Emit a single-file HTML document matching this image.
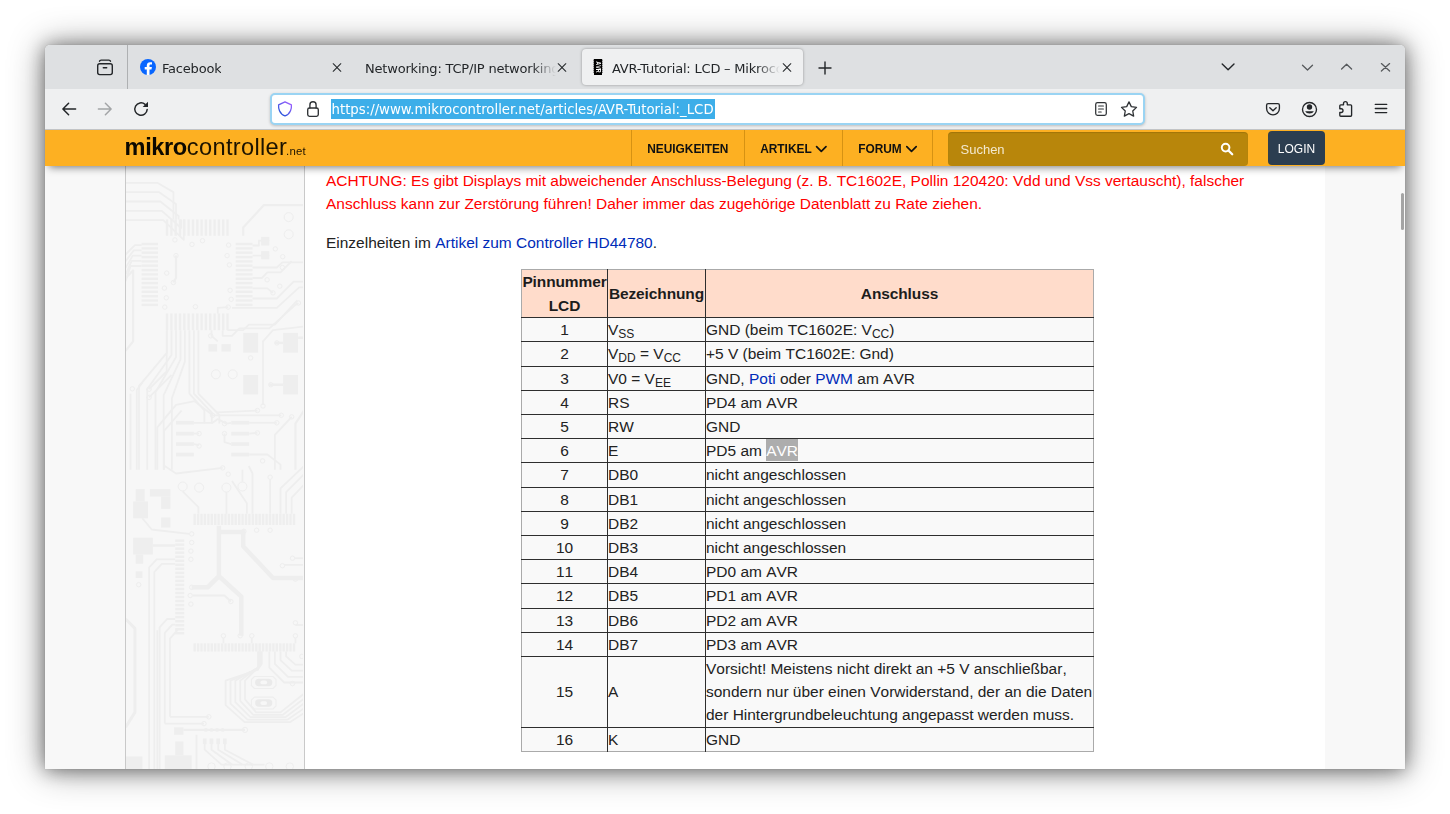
<!DOCTYPE html>
<html lang="de">
<head>
<meta charset="utf-8">
<title>AVR-Tutorial: LCD – Mikrocontroller.net</title>
<style>
*{box-sizing:border-box;margin:0;padding:0}
html,body{width:1450px;height:814px;overflow:hidden;background:#fff}
body{position:relative;font-family:"Liberation Sans",sans-serif}
#win{position:absolute;left:45px;top:45px;width:1360px;height:724px;background:#fff;border-radius:5px 5px 0 0;
 box-shadow:0 0 1px rgba(0,0,0,.25),0 1px 18px rgba(0,0,0,.42),0 1px 36px rgba(0,0,0,.42);}
#clip{position:absolute;inset:0;border-radius:5px 5px 0 0;overflow:hidden}
.ui{font-family:"DejaVu Sans","Liberation Sans",sans-serif;color:#232629;will-change:transform}
/* ---------- tab bar ---------- */
#tabbar{position:absolute;left:0;top:0;width:1360px;height:44px;background:#dee0e2}
#tabbar .sep{position:absolute;left:82px;top:0;width:1px;height:44px;background:#aeb0b2}
.tabtxt{position:absolute;top:14px;height:20px;line-height:20px;font-size:13px;white-space:nowrap;overflow:hidden;letter-spacing:-.2px}
.fade{-webkit-mask-image:linear-gradient(to right,#000 calc(100% - 24px),transparent 100%);mask-image:linear-gradient(to right,#000 calc(100% - 24px),transparent 100%)}
#acttab{position:absolute;left:537px;top:4px;width:221px;height:36px;background:#eff0f1;border-radius:4px;box-shadow:0 0 3px rgba(0,0,0,.35)}
svg{position:absolute;overflow:visible}
/* ---------- nav bar ---------- */
#navbar{position:absolute;left:0;top:44px;width:1360px;height:41px;background:#eff0f1;border-bottom:1px solid #c3c5c7}
#url{position:absolute;left:224.5px;top:4px;width:875px;height:32px;background:#fff;border:2px solid #9ad4f3;border-radius:5px;box-shadow:0 1px 3px rgba(0,0,0,.22)}
#urltxt{position:absolute;left:59px;top:4px;height:20px;line-height:20px;padding:0 1px;background:#3daee9;color:#fff;font-size:14.78px;font-family:"DejaVu Sans Condensed","DejaVu Sans",sans-serif;white-space:nowrap}
/* ---------- site header ---------- */
#hdr{position:absolute;left:0;top:85px;width:1360px;height:36px;background:#fdb022;box-shadow:0 5px 9px -4px rgba(0,0,0,.55);z-index:5}
#logo{position:absolute;left:79.6px;top:0;height:34px;line-height:34px;font-size:23.6px;color:#1c1300;white-space:nowrap;letter-spacing:.34px}
#logo b{font-weight:bold;color:#0d0900;letter-spacing:-.4px}
#logo small{font-size:11.4px;letter-spacing:.2px;margin-left:-1.2px}
.nav{position:absolute;top:0;height:36px;border-left:1px solid #d69213;line-height:39px;font-size:11.9px;font-weight:bold;color:#111;padding-left:15.2px;white-space:nowrap}
#search{position:absolute;left:903px;top:2px;width:300px;height:33.5px;background:#b8860b;border-radius:4px;box-shadow:inset 0 1px 1px rgba(0,0,0,.13);color:#f3e9cf;font-size:13px;line-height:35px;padding-left:12.5px}
#login{position:absolute;left:1223px;top:1px;width:57px;height:33.5px;background:#2c3e50;border-radius:4px;color:#fff;font-size:12px;line-height:36px;text-align:center}
/* ---------- page ---------- */
#page{position:absolute;left:0;top:121px;width:1360px;height:603px;background:#f8f8f8;overflow:hidden}
#side{position:absolute;left:80px;top:0;width:180px;height:603px;background:#f7f7f7;overflow:hidden}
#side i{position:absolute;top:0;width:1px;height:603px;background:#c9c9c9}
#main{position:absolute;left:260px;top:0;width:1020px;height:603px;background:#fff;font-size:15.47px;line-height:23.2px;color:#222;font-kerning:none}
#main p{position:absolute;left:21px;white-space:nowrap}
a{color:#002bb8;text-decoration:none}
#thumb{position:absolute;left:1356px;top:27px;width:3px;height:37px;border-radius:2px;background:#a4a4a4}
table{position:absolute;left:216px;top:103px;border-collapse:collapse;background:#f9f9f9;border:1px solid #aaa;font-size:15.47px;line-height:23.2px;color:#222;table-layout:fixed;width:573px}
td,th{border:1px solid #2e2e2e;padding:0;white-space:nowrap;text-align:left}
tr:first-child th{height:48.2px;padding:0;letter-spacing:-.1px}
th{background:#ffdccb;font-weight:bold;text-align:center;color:#1c1c1c}
tr:first-child th{border-top:none}
tr:last-child td{border-bottom:none}
td:first-child,th:first-child{border-left:none;text-align:center}
td:last-child,th:last-child{border-right:none}
sub{font-size:12px;line-height:0;vertical-align:-3px}
.sel{background:#adadad;color:#fff;padding:2.8px 0 1.4px}
</style>
</head>
<body>
<div id="win"><div id="clip">

<!-- TABBAR -->
<div id="tabbar" class="ui">
  <div class="sep"></div>
  <div class="tabtxt" style="left:117px">Facebook</div>
  <div class="tabtxt fade" style="left:320px;width:191px">Networking: TCP/IP networking</div>
  <div id="acttab"></div>
  <div class="tabtxt fade" style="left:567px;width:168px">AVR-Tutorial: LCD – Mikrocontroller.net</div>

  <svg width="1360" height="44" viewBox="45 45 1360 44" style="left:0;top:0" fill="none" stroke="#232629" stroke-linecap="round" stroke-linejoin="round">
    <!-- firefox view -->
    <g stroke-width="1.4">
      <rect x="97.7" y="63.7" width="14.6" height="10.9" rx="2"/>
      <path d="M99.5 61.2c.2-.7.8-1.100 1.600-1.100h7.800c.8 0 1.400.4 1.600 1.100"/>
      <path d="M103.3 67.800h3.400"/>
    </g>
    <!-- facebook -->
    <circle cx="148" cy="67" r="8" fill="#0866ff" stroke="none"/>
    <path d="M149.5 75v-5.5h2l.4-2.400h-2.400v-1.400c0-.8.3-1.300 1.400-1.300h1.100v-2.100c-.3-.05-1.100-.15-1.900-.15-2 0-3.300 1.200-3.300 3.300v1.650h-2.100v2.400h2.100V75z" fill="#fff" stroke="none"/>
    <!-- close buttons -->
    <g stroke-width="1.05">
      <path d="M333.2 63.7l7.6 7.6M340.8 63.7l-7.6 7.6"/>
      <path d="M558.2 63.7l7.6 7.6M565.8 63.7l-7.6 7.6"/>
      <path d="M783.2 63.7l7.6 7.6M790.8 63.7l-7.6 7.6"/>
    </g>
    <!-- new tab -->
    <path d="M819 68h12M825 62v12" stroke-width="1.4"/>
    <!-- list all tabs -->
    <path d="M1222.2 64l5.9 5.8 5.9-5.8" stroke-width="1.4"/>
    <!-- window controls -->
    <g stroke="#56595c" stroke-width="1.3">
      <path d="M1302.5 65.2l5 4.8 5-4.8"/>
      <path d="M1341.6 69l5-4.8 5 4.8"/>
      <path d="M1381.4 63.6l8.2 7.4M1389.6 63.6l-8.2 7.4"/>
    </g>
  </svg>
  <!-- favicon -->
  <svg width="10" height="16" viewBox="0 0 10 16" style="left:548px;top:14px">
    <path d="M1 0h8v16h-8z" fill="#000"/>
    <path d="M.4 1.2h.6M.4 3.2h.6M.4 5.2h.6M.4 7.2h.6M.4 9.2h.6M.4 11.2h.6M.4 13.2h.6M9 1.2h.6M9 3.2h.6M9 5.2h.6M9 7.2h.6M9 9.2h.6M9 11.2h.6M9 13.2h.6" stroke="#000" stroke-width="1"/>
    <text x="0" y="0" transform="translate(2.8 2.3) rotate(90)" font-family="Liberation Sans,sans-serif" font-weight="bold" font-size="7.1" fill="#fff" textLength="11.4" style="font-kerning:none" lengthAdjust="spacingAndGlyphs">AVR</text>
  </svg>
</div>

<!-- NAVBAR -->
<div id="navbar" class="ui">

  <svg width="1360" height="41" viewBox="45 89 1360 41" style="left:0;top:0" fill="none" stroke="#232629" stroke-linecap="round" stroke-linejoin="round">
    <defs><linearGradient id="shg" x1="0" y1="0" x2="1" y2="1"><stop offset="0" stop-color="#8a4cf0"/><stop offset="1" stop-color="#1b5ee0"/></linearGradient></defs>
    <!-- back / forward / reload -->
    <g stroke-width="1.5">
      <path d="M63 109h12.6M68.6 103.3L62.9 109l5.7 5.7"/>
      <path d="M98.4 109H111M105.4 103.3l5.7 5.7-5.7 5.7" stroke="#a3a5a7"/>
      <path d="M147.2 109.4a6.2 6.2 0 1 1-2.1-5" stroke-width="1.45"/>
    </g>
    <path d="M148 101.8v5.3h-5.3z" fill="#232629" stroke="none"/>
  </svg>

  <svg width="160" height="41" viewBox="1245 89 160 41" style="left:1200px;top:0" fill="none" stroke="#232629" stroke-linecap="round" stroke-linejoin="round" stroke-width="1.35">
    <!-- pocket -->
    <path d="M1268.200 103.600h9.600c.9 0 1.600.7 1.600 1.600v3.300a6.400 6.400 0 0 1-12.800 0v-3.300c0-.9.700-1.600 1.600-1.600z"/>
    <path d="M1269.800 107.700l3.200 3.100 3.200-3.100"/>
    <!-- account -->
    <circle cx="1309.500" cy="109.500" r="7"/>
    <circle cx="1309.5" cy="107" r="2.7" fill="#232629" stroke="none"/>
    <path d="M1305.100 111.300h8.800a4.700 3.500 0 0 1-8.800 0z" fill="#232629" stroke="none"/>
    <!-- extensions -->
    <path d="M1343.500 104.800v-1.300a1.900 1.900 0 0 1 3.800 0v1.300h3.300c.6 0 1 .4 1 1v9.400c0 .6-.4 1-1 1h-9.800c-.6 0-1-.4-1-1v-2.700h1.300a1.900 1.900 0 0 0 0-3.800h-1.300v-2.900c0-.6.4-1 1-1z"/>
    <!-- menu -->
    <path d="M1375.300 104.400h11.400M1375.300 108.500h11.400M1375.300 112.600h11.400"/>
  </svg>
  <div id="url">
  <svg width="875" height="32" viewBox="270 93 875 32" style="left:-2px;top:-2px" fill="none" stroke="#2f3235" stroke-linecap="round" stroke-linejoin="round">
    <!-- shield -->
    <path d="M285 101.9L291.4 104.9C291.4 104.9 291.700 108 290.500 110.700C289.300 113.400 287.300 115.100 285 115.900C282.700 115.100 280.700 113.400 279.500 110.700C278.300 108 278.600 104.900 278.600 104.900Z" stroke="url(#shg2)" stroke-width="1.3"/>
    <defs><linearGradient id="shg2" x1="1" y1="0" x2="0.2" y2="1"><stop offset="0.1" stop-color="#9a5cff"/><stop offset="1" stop-color="#1f55d8"/></linearGradient></defs>
    <!-- lock -->
    <rect x="307.7" y="108" width="10.6" height="8.4" rx="1.8" stroke-width="1.35"/>
    <path d="M309.9 108v-3.100a3.100 3.100 0 0 1 6.200 0v3.100" stroke-width="1.35"/>
    <!-- reader -->
    <rect x="1095.700" y="102.600" width="10.600" height="12.800" rx="1.800" stroke-width="1.25"/>
    <path d="M1098.600 106h4.800M1098.600 109h4.800M1098.600 112h2.600" stroke-width="1.2"/>
    <!-- star -->
    <path d="M1129 101.900l2.300 4.700 5.200.75-3.750 3.650.9 5.150-4.650-2.450-4.650 2.450.9-5.150-3.750-3.650 5.200-.75z" stroke-width="1.3"/>
  </svg>
<div id="urltxt">https://www.mikrocontroller.net/articles/AVR-Tutorial:_LCD</div></div>
</div>

<!-- SITE HEADER -->
<div id="hdr">
  <div id="logo"><b>mikro</b>controller<small>.net</small></div>
  <div class="nav" style="left:586px;width:113px">NEUIGKEITEN</div>
  <div class="nav" style="left:699px;width:98px">ARTIKEL</div>
  <div class="nav" style="left:797px;width:90px">FORUM</div>
  <div class="nav" style="left:887px;width:1px;padding:0"></div>
  <div id="search">Suchen</div>
  <div id="login">LOGIN</div>

  <svg width="1360" height="36" viewBox="45 130 1360 36" style="left:0;top:0" fill="none" stroke-linecap="round" stroke-linejoin="round">
    <path d="M816.600 146.600l4.700 4.700 4.700-4.700M906.800 146.600l4.700 4.700 4.700-4.700" stroke="#111" stroke-width="1.7"/>
    <circle cx="1225.600" cy="147.600" r="3.800" stroke="#fff" stroke-width="2"/>
    <path d="M1228.700 150.700l3.500 3.500" stroke="#fff" stroke-width="2.3"/>
  </svg>
</div>

<!-- PAGE -->
<div id="page">
  <div id="side"><!--PCB--><svg width="178" height="603" viewBox="0 0 178 603" style="left:0;top:0;overflow:hidden" fill="none" stroke="#eee" stroke-linejoin="round">
<rect x="40.8" y="53.4" width="2.4" height="16.4" fill="#eee" stroke="none"/>
<rect x="45.2" y="53.4" width="2.4" height="16.4" fill="#eee" stroke="none"/>
<rect x="49.5" y="53.4" width="2.4" height="16.4" fill="#eee" stroke="none"/>
<rect x="53.8" y="53.4" width="2.4" height="16.4" fill="#eee" stroke="none"/>
<rect x="58.1" y="53.4" width="2.4" height="16.4" fill="#eee" stroke="none"/>
<rect x="62.4" y="53.4" width="2.4" height="16.4" fill="#eee" stroke="none"/>
<rect x="66.8" y="53.4" width="2.4" height="16.4" fill="#eee" stroke="none"/>
<rect x="71.1" y="53.4" width="2.4" height="16.4" fill="#eee" stroke="none"/>
<rect x="75.4" y="53.4" width="2.4" height="16.4" fill="#eee" stroke="none"/>
<rect x="79.7" y="53.4" width="2.4" height="16.4" fill="#eee" stroke="none"/>
<rect x="84.0" y="53.4" width="2.4" height="16.4" fill="#eee" stroke="none"/>
<rect x="88.4" y="53.4" width="2.4" height="16.4" fill="#eee" stroke="none"/>
<rect x="92.7" y="53.4" width="2.4" height="16.4" fill="#eee" stroke="none"/>
<rect x="97.0" y="53.4" width="2.4" height="16.4" fill="#eee" stroke="none"/>
<rect x="101.3" y="53.4" width="2.4" height="16.4" fill="#eee" stroke="none"/>
<rect x="40.8" y="147.4" width="2.4" height="16.8" fill="#eee" stroke="none"/>
<rect x="45.2" y="147.4" width="2.4" height="16.8" fill="#eee" stroke="none"/>
<rect x="49.5" y="147.4" width="2.4" height="16.8" fill="#eee" stroke="none"/>
<rect x="53.8" y="147.4" width="2.4" height="16.8" fill="#eee" stroke="none"/>
<rect x="58.1" y="147.4" width="2.4" height="16.8" fill="#eee" stroke="none"/>
<rect x="62.4" y="147.4" width="2.4" height="16.8" fill="#eee" stroke="none"/>
<rect x="66.8" y="147.4" width="2.4" height="16.8" fill="#eee" stroke="none"/>
<rect x="71.1" y="147.4" width="2.4" height="16.8" fill="#eee" stroke="none"/>
<rect x="75.4" y="147.4" width="2.4" height="16.8" fill="#eee" stroke="none"/>
<rect x="79.7" y="147.4" width="2.4" height="16.8" fill="#eee" stroke="none"/>
<rect x="84.0" y="147.4" width="2.4" height="16.8" fill="#eee" stroke="none"/>
<rect x="88.4" y="147.4" width="2.4" height="16.8" fill="#eee" stroke="none"/>
<rect x="92.7" y="147.4" width="2.4" height="16.8" fill="#eee" stroke="none"/>
<rect x="97.0" y="147.4" width="2.4" height="16.8" fill="#eee" stroke="none"/>
<rect x="101.3" y="147.4" width="2.4" height="16.8" fill="#eee" stroke="none"/>
<rect x="16.6" y="76.8" width="16.4" height="2.4" fill="#eee" stroke="none"/>
<rect x="16.6" y="81.2" width="16.4" height="2.4" fill="#eee" stroke="none"/>
<rect x="16.6" y="85.5" width="16.4" height="2.4" fill="#eee" stroke="none"/>
<rect x="16.6" y="89.9" width="16.4" height="2.4" fill="#eee" stroke="none"/>
<rect x="16.6" y="94.2" width="16.4" height="2.4" fill="#eee" stroke="none"/>
<rect x="16.6" y="98.5" width="16.4" height="2.4" fill="#eee" stroke="none"/>
<rect x="16.6" y="102.9" width="16.4" height="2.4" fill="#eee" stroke="none"/>
<rect x="16.6" y="107.2" width="16.4" height="2.4" fill="#eee" stroke="none"/>
<rect x="16.6" y="111.6" width="16.4" height="2.4" fill="#eee" stroke="none"/>
<rect x="16.6" y="115.9" width="16.4" height="2.4" fill="#eee" stroke="none"/>
<rect x="16.6" y="120.3" width="16.4" height="2.4" fill="#eee" stroke="none"/>
<rect x="16.6" y="124.6" width="16.4" height="2.4" fill="#eee" stroke="none"/>
<rect x="16.6" y="129.0" width="16.4" height="2.4" fill="#eee" stroke="none"/>
<rect x="16.6" y="133.3" width="16.4" height="2.4" fill="#eee" stroke="none"/>
<rect x="16.6" y="137.7" width="16.4" height="2.4" fill="#eee" stroke="none"/>
<rect x="110.7" y="76.8" width="16.8" height="2.4" fill="#eee" stroke="none"/>
<rect x="110.7" y="81.2" width="16.8" height="2.4" fill="#eee" stroke="none"/>
<rect x="110.7" y="85.5" width="16.8" height="2.4" fill="#eee" stroke="none"/>
<rect x="110.7" y="89.9" width="16.8" height="2.4" fill="#eee" stroke="none"/>
<rect x="110.7" y="94.2" width="16.8" height="2.4" fill="#eee" stroke="none"/>
<rect x="110.7" y="98.5" width="16.8" height="2.4" fill="#eee" stroke="none"/>
<rect x="110.7" y="102.9" width="16.8" height="2.4" fill="#eee" stroke="none"/>
<rect x="110.7" y="107.2" width="16.8" height="2.4" fill="#eee" stroke="none"/>
<rect x="110.7" y="111.6" width="16.8" height="2.4" fill="#eee" stroke="none"/>
<rect x="110.7" y="115.9" width="16.8" height="2.4" fill="#eee" stroke="none"/>
<rect x="110.7" y="120.3" width="16.8" height="2.4" fill="#eee" stroke="none"/>
<rect x="110.7" y="124.6" width="16.8" height="2.4" fill="#eee" stroke="none"/>
<rect x="110.7" y="129.0" width="16.8" height="2.4" fill="#eee" stroke="none"/>
<rect x="110.7" y="133.3" width="16.8" height="2.4" fill="#eee" stroke="none"/>
<rect x="110.7" y="137.7" width="16.8" height="2.4" fill="#eee" stroke="none"/>
<path d="M0.6 16.8 L32.3 16.8 L48.4 26.1 L48.4 53.4" stroke-width="1.8"/>
<path d="M0.6 26.1 L33.8 26.1 L51.0 38.1 L51.0 53.4" stroke-width="1.8"/>
<path d="M0.6 35.5 L35.3 35.5 L53.6 50.0 L53.6 53.4" stroke-width="1.8"/>
<path d="M0.6 44.8 L36.8 44.8 L56.2 62.0 L56.2 53.4" stroke-width="1.8"/>
<path d="M0.6 54.1 L38.3 54.1 L58.8 73.9 L58.8 53.4" stroke-width="1.8"/>
<path d="M16.6 79.1 L9.9 79.1 L0.6 88.5" stroke-width="1.8"/>
<path d="M16.6 84.4 L8.8 84.4 L0.6 95.2" stroke-width="1.8"/>
<path d="M16.6 89.6 L7.7 89.6 L0.6 101.9" stroke-width="1.8"/>
<path d="M16.6 94.8 L6.6 94.8 L0.6 108.6" stroke-width="1.8"/>
<path d="M16.6 100.0 L5.5 100.0 L0.6 115.3" stroke-width="1.8"/>
<path d="M0.6 112.0 L8.1 104.5 L8.1 175.4 L0.6 184.8" stroke-width="2.2"/>
<path d="M127.5 79.5 L133.9 79.5 L133.9 74.7 L144.3 74.7" stroke-width="1.8"/>
<path d="M127.5 89.6 L144.3 89.6" stroke-width="1.8"/>
<path d="M127.5 101.5 L151.8 101.5 L157.4 96.3 L179.0 96.3" stroke-width="1.8"/>
<path d="M127.5 112.0 L136.8 112.0 L142.4 106.4 L155.5 106.4 L166.7 95.2" stroke-width="1.8"/>
<path d="M127.5 122.4 L142.4 122.4 L148.0 126.9" stroke-width="1.8"/>
<path d="M127.5 132.5 L151.8 132.5 L168.6 115.7 L179.0 115.7" stroke-width="1.8"/>
<path d="M107.0 141.8 L151.8 141.8 L174.2 121.3 L179.0 121.3" stroke-width="1.8"/>
<path d="M118.2 69.8 L118.2 61.6 L138.7 39.2 L179.0 39.2" stroke-width="2.2"/>
<circle cx="163.7" cy="51.1" r="4.5" stroke-width="1"/>
<circle cx="163.7" cy="68.3" r="4.5" stroke-width="1"/>
<rect x="136.1" y="70.9" width="8.2" height="8.6" fill="#eee" stroke="none"/>
<rect x="136.1" y="85.1" width="8.2" height="8.2" fill="#eee" stroke="none"/>
<circle cx="49.9" cy="73.9" r="2.2" stroke-width="1"/>
<circle cx="67.0" cy="78.4" r="2.2" stroke-width="1"/>
<circle cx="77.5" cy="74.7" r="2.2" stroke-width="1"/>
<circle cx="103.6" cy="79.1" r="2.2" stroke-width="1"/>
<circle cx="102.1" cy="89.6" r="2.2" stroke-width="1"/>
<circle cx="104.4" cy="98.9" r="2.2" stroke-width="1"/>
<circle cx="51.0" cy="89.6" r="2.2" stroke-width="1"/>
<circle cx="41.7" cy="107.1" r="2.2" stroke-width="1"/>
<circle cx="48.4" cy="116.5" r="2.2" stroke-width="1"/>
<circle cx="39.4" cy="122.1" r="2.2" stroke-width="1"/>
<circle cx="41.3" cy="131.8" r="2.2" stroke-width="1"/>
<circle cx="39.8" cy="141.1" r="2.2" stroke-width="1"/>
<circle cx="70.4" cy="140.7" r="2.2" stroke-width="1"/>
<circle cx="103.2" cy="141.1" r="2.2" stroke-width="1"/>
<circle cx="106.2" cy="133.3" r="2.2" stroke-width="1"/>
<circle cx="105.1" cy="124.3" r="2.2" stroke-width="1"/>
<circle cx="150.3" cy="82.9" r="2.2" stroke-width="1"/>
<circle cx="157.7" cy="90.7" r="2.2" stroke-width="1"/>
<circle cx="157.4" cy="101.5" r="2.2" stroke-width="1"/>
<circle cx="142.1" cy="113.8" r="2.2" stroke-width="1"/>
<circle cx="154.8" cy="120.2" r="2.2" stroke-width="1"/>
<circle cx="148.0" cy="126.9" r="2.2" stroke-width="1"/>
<circle cx="173.4" cy="137.0" r="2.2" stroke-width="1"/>
<path d="M51.0 89.6 L51.0 112.0 L48.4 116.5" stroke-width="2.2"/>
<path d="M42.0 164.2 L42.0 186.6 L14.0 220.2 L14.0 303.8" stroke-width="1.8"/>
<path d="M46.5 164.2 L46.5 188.9 L22.2 223.2 L22.2 303.8" stroke-width="1.8"/>
<path d="M51.0 164.2 L51.0 191.1 L30.5 226.2 L30.5 303.8" stroke-width="1.8"/>
<path d="M55.5 164.2 L55.5 193.4 L38.7 229.2 L38.7 303.8" stroke-width="1.8"/>
<path d="M59.9 164.2 L59.9 195.6 L46.9 232.2 L46.9 303.8" stroke-width="1.8"/>
<path d="M64.4 164.2 L64.4 227.7 L79.4 244.5 L79.4 257.6" stroke-width="1.8"/>
<path d="M68.9 164.2 L68.9 227.7 L86.8 246.7 L86.8 257.6" stroke-width="1.8"/>
<path d="M73.4 164.2 L73.4 227.7 L94.3 249.0 L94.3 257.6" stroke-width="1.8"/>
<path d="M86.5 164.2 L86.5 169.8 L92.8 175.4" stroke-width="1.8"/>
<path d="M92.8 147.4 L92.8 141.8 L103.2 141.1" stroke-width="1.8"/>
<path d="M97.7 164.2 L97.7 169.8 L107.0 169.8 L114.4 162.4 L144.3 162.4 L170.4 138.9 L173.4 137.0" stroke-width="1.8"/>
<path d="M102.5 164.2 L118.2 164.2 L123.8 158.6 L149.9 158.6 L172.3 134.4" stroke-width="1.8"/>
<circle cx="85.7" cy="169.8" r="2.2" stroke-width="1"/>
<rect x="118.2" y="166.9" width="14.9" height="19.8" fill="#eee" stroke="none"/>
<rect x="158.1" y="166.9" width="14.9" height="19.8" fill="#eee" stroke="none"/>
<rect x="118.2" y="209.0" width="14.9" height="19.4" fill="#eee" stroke="none"/>
<rect x="158.1" y="209.0" width="14.9" height="19.4" fill="#eee" stroke="none"/>
<rect x="83.5" y="178.1" width="8.6" height="7.5" fill="#eee" stroke="none"/>
<rect x="96.5" y="178.1" width="9.3" height="7.5" fill="#eee" stroke="none"/>
<circle cx="90.9" cy="208.3" r="4.5" stroke-width="1"/>
<circle cx="107.7" cy="208.3" r="4.5" stroke-width="1"/>
<circle cx="125.6" cy="191.9" r="2.2" stroke-width="1"/>
<path d="M149.9 176.9 L158.1 176.9" stroke-width="2.5"/>
<path d="M144.3 218.7 L158.1 218.7" stroke-width="2.5"/>
<circle cx="151.8" cy="176.9" r="2.2" stroke-width="1"/>
<circle cx="145.8" cy="218.7" r="2.2" stroke-width="1"/>
<path d="M173.1 171.7 L179.0 171.7" stroke-width="2.5"/>
<path d="M138.0 238.9 L138.0 175.4 L148.0 164.2 L179.0 160.5" stroke-width="1.8"/>
<circle cx="138.0" cy="240.0" r="2.2" stroke-width="1"/>
<circle cx="132.4" cy="244.5" r="2.2" stroke-width="1"/>
<circle cx="156.3" cy="249.3" r="2.2" stroke-width="1"/>
<circle cx="166.7" cy="250.8" r="2.2" stroke-width="1"/>
<circle cx="87.6" cy="249.3" r="2.2" stroke-width="1"/>
<path d="M69.7 235.2 L87.6 249.3 L156.3 249.3" stroke-width="1.8"/>
<path d="M92.1 246.4 L132.4 244.5" stroke-width="1.8"/>
<path d="M166.7 250.8 L149.9 268.8 L149.9 303.8" stroke-width="1.8"/>
<path d="M179.0 244.5 L170.4 257.6 L170.4 303.8" stroke-width="2.2"/>
<rect x="51.0" y="254.9" width="17.9" height="3.7" fill="#eee" stroke="none"/>
<rect x="106.2" y="254.9" width="17.9" height="3.7" fill="#eee" stroke="none"/>
<rect x="51.0" y="265.8" width="17.9" height="3.7" fill="#eee" stroke="none"/>
<rect x="106.2" y="265.8" width="17.9" height="3.7" fill="#eee" stroke="none"/>
<rect x="51.0" y="276.2" width="17.9" height="3.7" fill="#eee" stroke="none"/>
<rect x="106.2" y="276.2" width="17.9" height="3.7" fill="#eee" stroke="none"/>
<rect x="51.0" y="286.7" width="17.9" height="3.7" fill="#eee" stroke="none"/>
<rect x="106.2" y="286.7" width="17.9" height="3.7" fill="#eee" stroke="none"/>
<path d="M68.9 256.8 L87.6 256.8 L92.8 253.1 L101.4 257.6 L106.2 256.8" stroke-width="1.8"/>
<path d="M124.2 256.8 L151.8 256.8" stroke-width="1.8"/>
<path d="M68.9 267.6 L74.1 267.6" stroke-width="1.8"/>
<circle cx="74.1" cy="267.6" r="2.2" stroke-width="1"/>
<path d="M68.9 278.1 L74.1 279.2" stroke-width="1.8"/>
<circle cx="74.1" cy="280.0" r="2.2" stroke-width="1"/>
<circle cx="99.5" cy="257.6" r="2.2" stroke-width="1"/>
<circle cx="99.5" cy="267.6" r="2.2" stroke-width="1"/>
<circle cx="151.8" cy="256.8" r="2.2" stroke-width="1"/>
<circle cx="132.4" cy="266.9" r="2.2" stroke-width="1"/>
<path d="M99.5 267.6 L99.5 276.2 L106.2 278.1" stroke-width="1.8"/>
<path d="M124.2 267.6 L132.4 266.9" stroke-width="1.8"/>
<path d="M124.2 288.5 L142.4 288.5 L155.5 298.6 L155.5 303.8" stroke-width="1.8"/>
<circle cx="137.6" cy="294.9" r="2.2" stroke-width="1"/>
<path d="M11.8 303.8 L11.8 224.0 L17.4 216.5" stroke-width="1.8"/>
<path d="M5.5 303.8 L5.5 227.7" stroke-width="1.8"/>
<circle cx="7.3" cy="222.8" r="2.2" stroke-width="1"/>
<circle cx="24.1" cy="223.2" r="2.2" stroke-width="1"/>
<circle cx="24.1" cy="231.4" r="2.2" stroke-width="1"/>
<path d="M24.1 223.2 L41.7 205.3 L41.7 164.2" stroke-width="1.8"/>
<path d="M24.1 231.4 L46.5 209.0" stroke-width="1.8"/>
<path d="M32.3 303.8 L32.3 261.3 L51.0 238.9 L69.7 235.2" stroke-width="1.8"/>
<path d="M39.0 303.8 L39.0 265.0 L56.6 244.5" stroke-width="1.8"/>
<rect x="68.5" y="347.8" width="2.4" height="11.2" fill="#eee" stroke="none"/>
<rect x="71.9" y="347.8" width="2.4" height="11.2" fill="#eee" stroke="none"/>
<rect x="75.3" y="347.8" width="2.4" height="11.2" fill="#eee" stroke="none"/>
<rect x="78.7" y="347.8" width="2.4" height="11.2" fill="#eee" stroke="none"/>
<rect x="82.2" y="347.8" width="2.4" height="11.2" fill="#eee" stroke="none"/>
<rect x="85.6" y="347.8" width="2.4" height="11.2" fill="#eee" stroke="none"/>
<rect x="89.0" y="347.8" width="2.4" height="11.2" fill="#eee" stroke="none"/>
<rect x="92.4" y="347.8" width="2.4" height="11.2" fill="#eee" stroke="none"/>
<rect x="95.9" y="347.8" width="2.4" height="11.2" fill="#eee" stroke="none"/>
<rect x="99.3" y="347.8" width="2.4" height="11.2" fill="#eee" stroke="none"/>
<rect x="102.7" y="347.8" width="2.4" height="11.2" fill="#eee" stroke="none"/>
<rect x="106.1" y="347.8" width="2.4" height="11.2" fill="#eee" stroke="none"/>
<rect x="109.5" y="347.8" width="2.4" height="11.2" fill="#eee" stroke="none"/>
<rect x="113.0" y="347.8" width="2.4" height="11.2" fill="#eee" stroke="none"/>
<rect x="116.4" y="347.8" width="2.4" height="11.2" fill="#eee" stroke="none"/>
<rect x="119.8" y="347.8" width="2.4" height="11.2" fill="#eee" stroke="none"/>
<rect x="123.2" y="347.8" width="2.4" height="11.2" fill="#eee" stroke="none"/>
<rect x="126.7" y="347.8" width="2.4" height="11.2" fill="#eee" stroke="none"/>
<rect x="130.1" y="347.8" width="2.4" height="11.2" fill="#eee" stroke="none"/>
<rect x="133.5" y="347.8" width="2.4" height="11.2" fill="#eee" stroke="none"/>
<rect x="136.9" y="347.8" width="2.4" height="11.2" fill="#eee" stroke="none"/>
<rect x="140.4" y="347.8" width="2.4" height="11.2" fill="#eee" stroke="none"/>
<rect x="143.8" y="347.8" width="2.4" height="11.2" fill="#eee" stroke="none"/>
<rect x="147.2" y="347.8" width="2.4" height="11.2" fill="#eee" stroke="none"/>
<rect x="150.6" y="347.8" width="2.4" height="11.2" fill="#eee" stroke="none"/>
<rect x="154.1" y="347.8" width="2.4" height="11.2" fill="#eee" stroke="none"/>
<rect x="157.5" y="347.8" width="2.4" height="11.2" fill="#eee" stroke="none"/>
<rect x="160.9" y="347.8" width="2.4" height="11.2" fill="#eee" stroke="none"/>
<rect x="164.3" y="347.8" width="2.4" height="11.2" fill="#eee" stroke="none"/>
<rect x="167.8" y="347.8" width="2.4" height="11.2" fill="#eee" stroke="none"/>
<rect x="68.5" y="477.3" width="2.4" height="8.2" fill="#eee" stroke="none"/>
<rect x="71.9" y="477.3" width="2.4" height="8.2" fill="#eee" stroke="none"/>
<rect x="75.3" y="477.3" width="2.4" height="8.2" fill="#eee" stroke="none"/>
<rect x="78.7" y="477.3" width="2.4" height="8.2" fill="#eee" stroke="none"/>
<rect x="82.2" y="477.3" width="2.4" height="8.2" fill="#eee" stroke="none"/>
<rect x="85.6" y="477.3" width="2.4" height="8.2" fill="#eee" stroke="none"/>
<rect x="89.0" y="477.3" width="2.4" height="8.2" fill="#eee" stroke="none"/>
<rect x="92.4" y="477.3" width="2.4" height="8.2" fill="#eee" stroke="none"/>
<rect x="95.9" y="477.3" width="2.4" height="8.2" fill="#eee" stroke="none"/>
<rect x="99.3" y="477.3" width="2.4" height="8.2" fill="#eee" stroke="none"/>
<rect x="102.7" y="477.3" width="2.4" height="8.2" fill="#eee" stroke="none"/>
<rect x="106.1" y="477.3" width="2.4" height="8.2" fill="#eee" stroke="none"/>
<rect x="109.5" y="477.3" width="2.4" height="8.2" fill="#eee" stroke="none"/>
<rect x="113.0" y="477.3" width="2.4" height="8.2" fill="#eee" stroke="none"/>
<rect x="116.4" y="477.3" width="2.4" height="8.2" fill="#eee" stroke="none"/>
<rect x="119.8" y="477.3" width="2.4" height="8.2" fill="#eee" stroke="none"/>
<rect x="123.2" y="477.3" width="2.4" height="8.2" fill="#eee" stroke="none"/>
<rect x="126.7" y="477.3" width="2.4" height="8.2" fill="#eee" stroke="none"/>
<rect x="130.1" y="477.3" width="2.4" height="8.2" fill="#eee" stroke="none"/>
<rect x="133.5" y="477.3" width="2.4" height="8.2" fill="#eee" stroke="none"/>
<rect x="136.9" y="477.3" width="2.4" height="8.2" fill="#eee" stroke="none"/>
<rect x="140.4" y="477.3" width="2.4" height="8.2" fill="#eee" stroke="none"/>
<rect x="143.8" y="477.3" width="2.4" height="8.2" fill="#eee" stroke="none"/>
<rect x="147.2" y="477.3" width="2.4" height="8.2" fill="#eee" stroke="none"/>
<rect x="150.6" y="477.3" width="2.4" height="8.2" fill="#eee" stroke="none"/>
<rect x="154.1" y="477.3" width="2.4" height="8.2" fill="#eee" stroke="none"/>
<rect x="157.5" y="477.3" width="2.4" height="8.2" fill="#eee" stroke="none"/>
<rect x="160.9" y="477.3" width="2.4" height="8.2" fill="#eee" stroke="none"/>
<rect x="164.3" y="477.3" width="2.4" height="8.2" fill="#eee" stroke="none"/>
<rect x="167.8" y="477.3" width="2.4" height="8.2" fill="#eee" stroke="none"/>
<rect x="50.2" y="373.5" width="9.0" height="2.4" fill="#eee" stroke="none"/>
<rect x="50.2" y="377.5" width="9.0" height="2.4" fill="#eee" stroke="none"/>
<rect x="50.2" y="381.5" width="9.0" height="2.4" fill="#eee" stroke="none"/>
<rect x="50.2" y="385.5" width="9.0" height="2.4" fill="#eee" stroke="none"/>
<rect x="50.2" y="389.6" width="9.0" height="2.4" fill="#eee" stroke="none"/>
<rect x="50.2" y="393.6" width="9.0" height="2.4" fill="#eee" stroke="none"/>
<rect x="50.2" y="397.6" width="9.0" height="2.4" fill="#eee" stroke="none"/>
<rect x="50.2" y="401.6" width="9.0" height="2.4" fill="#eee" stroke="none"/>
<rect x="50.2" y="405.7" width="9.0" height="2.4" fill="#eee" stroke="none"/>
<rect x="50.2" y="409.7" width="9.0" height="2.4" fill="#eee" stroke="none"/>
<rect x="50.2" y="413.7" width="9.0" height="2.4" fill="#eee" stroke="none"/>
<rect x="50.2" y="417.7" width="9.0" height="2.4" fill="#eee" stroke="none"/>
<rect x="50.2" y="421.8" width="9.0" height="2.4" fill="#eee" stroke="none"/>
<rect x="50.2" y="425.8" width="9.0" height="2.4" fill="#eee" stroke="none"/>
<rect x="50.2" y="429.8" width="9.0" height="2.4" fill="#eee" stroke="none"/>
<rect x="50.2" y="433.8" width="9.0" height="2.4" fill="#eee" stroke="none"/>
<rect x="50.2" y="437.9" width="9.0" height="2.4" fill="#eee" stroke="none"/>
<rect x="50.2" y="441.9" width="9.0" height="2.4" fill="#eee" stroke="none"/>
<rect x="50.2" y="445.9" width="9.0" height="2.4" fill="#eee" stroke="none"/>
<rect x="50.2" y="449.9" width="9.0" height="2.4" fill="#eee" stroke="none"/>
<rect x="50.2" y="454.0" width="9.0" height="2.4" fill="#eee" stroke="none"/>
<rect x="50.2" y="458.0" width="9.0" height="2.4" fill="#eee" stroke="none"/>
<rect x="50.2" y="462.0" width="9.0" height="2.4" fill="#eee" stroke="none"/>
<rect x="50.2" y="466.0" width="9.0" height="2.4" fill="#eee" stroke="none"/>
<path d="M93.9 359.7 L93.9 410.1 L82.7 421.3 L66.7 421.3" stroke-width="4.5"/>
<path d="M93.9 410.1 L116.3 430.6 L116.3 469.8" stroke-width="4.5"/>
<path d="M93.9 366.1 L118.2 366.1 L118.2 380.3 L148.0 412.0 L179.0 412.0" stroke-width="4.5"/>
<rect x="8.1" y="335.5" width="14.9" height="16.8" fill="#eee" stroke="none"/>
<rect x="10.7" y="323.1" width="9.0" height="12.3" fill="#eee" stroke="none"/>
<rect x="24.9" y="323.1" width="20.5" height="7.5" fill="#eee" stroke="none"/>
<rect x="36.1" y="330.6" width="9.3" height="12.3" fill="#eee" stroke="none"/>
<rect x="36.1" y="351.5" width="9.3" height="10.1" fill="#eee" stroke="none"/>
<rect x="8.1" y="371.7" width="19.8" height="16.8" fill="#eee" stroke="none"/>
<rect x="10.7" y="388.5" width="7.5" height="9.3" fill="#eee" stroke="none"/>
<rect x="10.7" y="405.3" width="6.7" height="6.7" fill="#eee" stroke="none"/>
<circle cx="13.7" cy="418.7" r="2.2" stroke-width="1"/>
<path d="M27.8 379.5 L50.2 379.5" stroke-width="2.5"/>
<path d="M17.4 352.3 L26.7 363.5 L64.1 367.9" stroke-width="1.8"/>
<circle cx="66.7" cy="367.9" r="2.2" stroke-width="1"/>
<circle cx="66.7" cy="376.5" r="2.2" stroke-width="1"/>
<circle cx="65.9" cy="385.1" r="2.2" stroke-width="1"/>
<circle cx="65.9" cy="393.3" r="2.2" stroke-width="1"/>
<circle cx="57.7" cy="320.5" r="4.5" stroke-width="1"/>
<circle cx="74.1" cy="321.6" r="4.5" stroke-width="1"/>
<circle cx="101.4" cy="321.6" r="4.5" stroke-width="1"/>
<circle cx="117.4" cy="320.5" r="4.5" stroke-width="1"/>
<circle cx="145.1" cy="311.2" r="2.2" stroke-width="1"/>
<circle cx="103.2" cy="308.2" r="2.2" stroke-width="1"/>
<circle cx="97.7" cy="301.9" r="2.2" stroke-width="1"/>
<path d="M57.7 325.4 L73.4 341.1 L73.4 347.8" stroke-width="1.8"/>
<path d="M101.4 326.1 L101.4 347.8" stroke-width="1.8"/>
<path d="M107.0 314.9 L121.9 337.3 L121.9 347.8" stroke-width="1.8"/>
<path d="M117.4 315.7 L117.4 303.7" stroke-width="1.8"/>
<path d="M127.5 347.8 L127.5 307.5 L123.8 300.0" stroke-width="1.8"/>
<path d="M145.1 313.4 L145.1 347.8" stroke-width="1.8"/>
<path d="M155.5 347.8 L155.5 322.4 L179.0 300.0" stroke-width="1.8"/>
<path d="M161.1 347.8 L161.1 326.1 L179.0 308.2" stroke-width="1.8"/>
<path d="M166.7 347.8 L166.7 331.7 L179.0 318.7" stroke-width="1.8"/>
<path d="M39.8 300.0 L51.0 307.5 L97.7 301.9" stroke-width="1.8"/>
<circle cx="131.6" cy="364.2" r="2.2" stroke-width="1"/>
<circle cx="145.1" cy="364.2" r="2.2" stroke-width="1"/>
<circle cx="118.9" cy="365.3" r="2.2" stroke-width="1"/>
<circle cx="157.4" cy="399.7" r="2.2" stroke-width="1"/>
<circle cx="167.5" cy="392.2" r="2.2" stroke-width="1"/>
<path d="M159.2 398.9 L179.0 398.9" stroke-width="1.8"/>
<path d="M169.7 392.2 L179.0 392.2" stroke-width="1.8"/>
<circle cx="170.4" cy="413.1" r="2.2" stroke-width="1"/>
<circle cx="66.7" cy="421.3" r="2.2" stroke-width="1"/>
<circle cx="65.2" cy="429.5" r="2.2" stroke-width="1"/>
<circle cx="65.9" cy="438.1" r="2.2" stroke-width="1"/>
<circle cx="105.9" cy="435.5" r="2.2" stroke-width="1"/>
<path d="M67.8 429.5 L99.5 429.5 L105.9 435.5" stroke-width="1.8"/>
<circle cx="98.4" cy="469.8" r="2.2" stroke-width="1"/>
<circle cx="115.2" cy="469.8" r="2.2" stroke-width="1"/>
<circle cx="126.8" cy="469.8" r="2.2" stroke-width="1"/>
<circle cx="170.4" cy="456.8" r="2.2" stroke-width="1"/>
<circle cx="170.4" cy="469.8" r="2.2" stroke-width="1"/>
<path d="M98.4 472.1 L98.4 477.3" stroke-width="1.8"/>
<path d="M126.8 472.1 L126.8 477.3" stroke-width="1.8"/>
<path d="M170.4 459.0 L179.0 459.0" stroke-width="1.8"/>
<path d="M170.4 472.1 L170.4 477.3" stroke-width="1.8"/>
<path d="M50.2 393.3 L31.6 393.3 L24.1 401.5 L24.1 603.8" stroke-width="1.8"/>
<path d="M50.2 397.8 L36.8 397.8 L29.3 406.0 L29.3 603.8" stroke-width="1.8"/>
<path d="M50.2 453.0 L42.0 453.0 L34.6 461.3 L34.6 603.8" stroke-width="1.8"/>
<path d="M50.2 458.6 L47.3 458.6 L39.8 466.9 L39.8 557.6" stroke-width="1.8"/>
<path d="M50.2 464.2 L52.5 464.2 L45.0 472.5 L45.0 550.8" stroke-width="1.8"/>
<path d="M39.8 557.6 L79.0 557.6" stroke-width="1.8"/>
<path d="M45.0 550.8 L83.8 550.8" stroke-width="1.8"/>
<circle cx="83.8" cy="550.8" r="2.2" stroke-width="1"/>
<circle cx="79.0" cy="557.6" r="2.2" stroke-width="1"/>
<path d="M0.6 453.0 L9.9 462.4 L9.9 546.4 L0.6 561.3" stroke-width="3"/>
<path d="M136.8 485.5 L136.8 497.8 L120.0 514.6 L120.0 533.3 L131.2 546.4 L155.5 546.4 L179.0 527.7" stroke-width="1.8"/>
<path d="M135.9 485.5 L135.9 499.3 L115.2 514.6 L115.2 534.8 L128.3 548.8 L157.9 548.8 L179.0 532.5" stroke-width="1.8"/>
<path d="M134.9 485.5 L134.9 500.7 L110.3 514.6 L110.3 536.2 L125.4 551.2 L160.4 551.2 L179.0 537.4" stroke-width="1.8"/>
<path d="M133.9 485.5 L133.9 502.2 L105.5 514.6 L105.5 537.7 L122.5 553.6 L162.8 553.6 L179.0 542.3" stroke-width="1.8"/>
<path d="M133.0 485.5 L133.0 503.7 L100.6 514.6 L100.6 539.1 L119.6 556.1 L165.2 556.1 L179.0 547.1" stroke-width="1.8"/>
<path d="M144.3 485.5 L144.3 501.6 L159.2 516.5 L179.0 516.5" stroke-width="1.8"/>
<path d="M149.9 485.5 L149.9 497.8 L163.0 510.9 L179.0 510.9" stroke-width="1.8"/>
<path d="M155.5 485.5 L155.5 494.1 L166.7 504.6 L179.0 504.6" stroke-width="1.8"/>
<path d="M161.1 485.5 L161.1 490.4 L170.4 498.6 L179.0 498.6" stroke-width="1.8"/>
<circle cx="167.5" cy="517.6" r="2.2" stroke-width="1"/>
<circle cx="176.8" cy="490.4" r="2.2" stroke-width="1"/>
<path d="M126.4 513.5 L129.4 510.5 L148.0 510.5 L151.0 513.5 L151.0 519.5 L148.0 522.5 L129.4 522.5 L126.4 519.5 Z" stroke-width="1.1"/>
<rect x="130.1" y="512.8" width="17.2" height="7.5" rx="3.7" fill="#eaeaea" stroke="none"/>
<rect x="135.4" y="514.6" width="6.7" height="3.7" rx="1.9" fill="#f7f7f7" stroke="none"/>
<path d="M126.4 534.0 L129.4 531.1 L148.0 531.1 L151.0 534.0 L151.0 540.0 L148.0 543.0 L129.4 543.0 L126.4 540.0 Z" stroke-width="1.1"/>
<rect x="130.1" y="533.3" width="17.2" height="7.5" rx="3.7" fill="#eaeaea" stroke="none"/>
<rect x="135.4" y="535.2" width="6.7" height="3.7" rx="1.9" fill="#f7f7f7" stroke="none"/>
<rect x="49.1" y="561.3" width="9.3" height="7.5" fill="#eee" stroke="none"/>
<path d="M58.5 563.9 L120.0 563.9" stroke-width="2.2"/>
<circle cx="120.0" cy="563.9" r="2.6" stroke-width="1"/>
<circle cx="80.9" cy="563.9" r="1.9" fill="#eee" stroke="none"/>
<circle cx="86.5" cy="563.9" r="1.9" fill="#eee" stroke="none"/>
<circle cx="92.1" cy="563.9" r="1.9" fill="#eee" stroke="none"/>
<circle cx="97.7" cy="563.9" r="1.9" fill="#eee" stroke="none"/>
<rect x="77.9" y="572.5" width="3.7" height="5.6" fill="#eee" stroke="none"/>
<rect x="84.6" y="572.5" width="3.7" height="5.6" fill="#eee" stroke="none"/>
<rect x="91.3" y="572.5" width="3.7" height="5.6" fill="#eee" stroke="none"/>
<rect x="98.0" y="572.5" width="3.7" height="5.6" fill="#eee" stroke="none"/>
<rect x="50.2" y="575.5" width="8.2" height="13.8" fill="#eee" stroke="none"/>
<rect x="39.8" y="589.3" width="26.9" height="14.6" fill="#eee" stroke="none"/>
<rect x="-1.3" y="590.4" width="18.7" height="13.4" fill="#eee" stroke="none"/>
<path d="M79.7 578.1 L79.7 583.7 L96.5 598.6 L105.9 598.6" stroke-width="1.8"/>
<path d="M86.5 578.1 L86.5 583.7 L107.0 598.6 L117.1 598.6" stroke-width="1.8"/>
<path d="M93.2 578.1 L93.2 583.7 L117.4 598.6 L128.3 598.6" stroke-width="1.8"/>
<path d="M99.9 578.1 L99.9 583.7 L127.9 598.6 L139.5 598.6" stroke-width="1.8"/>
<circle cx="86.5" cy="600.5" r="3.7" stroke-width="1"/>
<circle cx="102.5" cy="600.5" r="3.7" stroke-width="1"/>
<circle cx="123.8" cy="600.5" r="3.7" stroke-width="1"/>
<circle cx="144.3" cy="600.5" r="3.7" stroke-width="1"/>
<circle cx="164.8" cy="600.5" r="3.7" stroke-width="1"/>
<path d="M71.5 568.8 L71.5 603.8" stroke-width="1.8"/>
<path d="M32.3 464.2 L32.3 603.8" stroke-width="1.8"/>
</svg><!--/PCB--><i style="left:0"></i><i style="left:179px"></i></div>
  <div id="main">
    <p style="top:3px;color:#f00">ACHTUNG: Es gibt Displays mit abweichender Anschluss-Belegung (z. B. TC1602E, Pollin 120420: Vdd und Vss vertauscht), falscher<br>Anschluss kann zur Zerstörung führen! Daher immer das zugehörige Datenblatt zu Rate ziehen.</p>
    <p style="top:65px">Einzelheiten im <a>Artikel zum Controller HD44780</a>.</p>
    <table>
      <colgroup><col style="width:86px"><col style="width:98px"><col style="width:388px"></colgroup>
      <tr><th>Pinnummer<br>LCD</th><th>Bezeichnung</th><th>Anschluss</th></tr>
      <tr><td>1</td><td>V<sub>SS</sub></td><td>GND (beim TC1602E: V<sub>CC</sub>)</td></tr>
      <tr><td>2</td><td>V<sub>DD</sub> = V<sub>CC</sub></td><td>+5 V (beim TC1602E: Gnd)</td></tr>
      <tr><td>3</td><td>V0 = V<sub>EE</sub></td><td>GND, <a>Poti</a> oder <a>PWM</a> am AVR</td></tr>
      <tr><td>4</td><td>RS</td><td>PD4 am AVR</td></tr>
      <tr><td>5</td><td>RW</td><td>GND</td></tr>
      <tr><td>6</td><td>E</td><td>PD5 am <span class="sel">AVR</span></td></tr>
      <tr><td>7</td><td>DB0</td><td>nicht angeschlossen</td></tr>
      <tr><td>8</td><td>DB1</td><td>nicht angeschlossen</td></tr>
      <tr><td>9</td><td>DB2</td><td>nicht angeschlossen</td></tr>
      <tr><td>10</td><td>DB3</td><td>nicht angeschlossen</td></tr>
      <tr><td>11</td><td>DB4</td><td>PD0 am AVR</td></tr>
      <tr><td>12</td><td>DB5</td><td>PD1 am AVR</td></tr>
      <tr><td>13</td><td>DB6</td><td>PD2 am AVR</td></tr>
      <tr><td>14</td><td>DB7</td><td>PD3 am AVR</td></tr>
      <tr><td>15</td><td>A</td><td>Vorsicht! Meistens nicht direkt an +5 V anschließbar,<br>sondern nur über einen Vorwiderstand, der an die Daten<br>der Hintergrundbeleuchtung angepasst werden muss.</td></tr>
      <tr><td>16</td><td>K</td><td>GND</td></tr>
    </table>
  </div>
  <div id="thumb"></div>
</div>

</div></div>
</body>
</html>
